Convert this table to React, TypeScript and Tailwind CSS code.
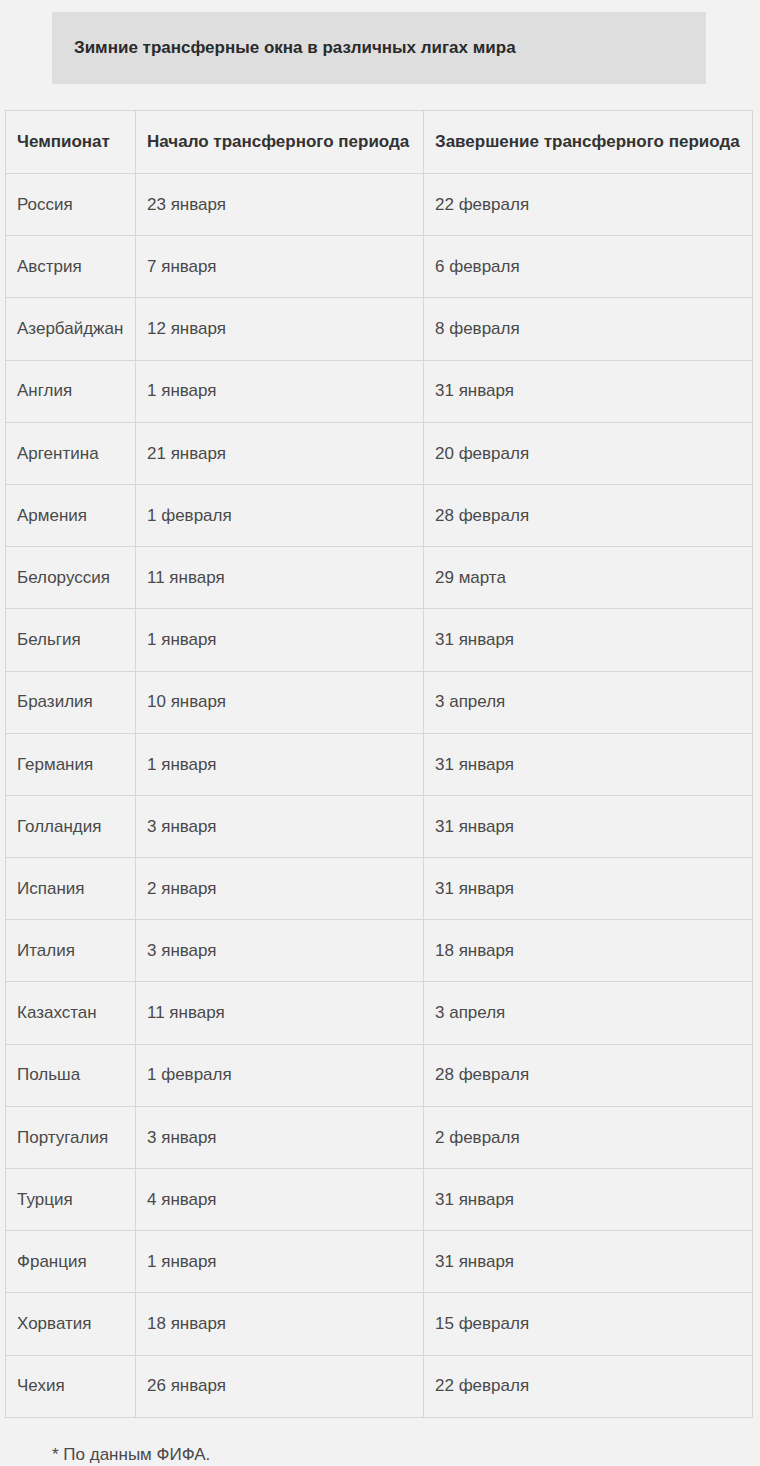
const rows: [string, string, string][] = [
  ['Россия', '23 января', '22 февраля'],
  ['Австрия', '7 января', '6 февраля'],
  ['Азербайджан', '12 января', '8 февраля'],
  ['Англия', '1 января', '31 января'],
  ['Аргентина', '21 января', '20 февраля'],
  ['Армения', '1 февраля', '28 февраля'],
  ['Белоруссия', '11 января', '29 марта'],
  ['Бельгия', '1 января', '31 января'],
  ['Бразилия', '10 января', '3 апреля'],
  ['Германия', '1 января', '31 января'],
  ['Голландия', '3 января', '31 января'],
  ['Испания', '2 января', '31 января'],
  ['Италия', '3 января', '18 января'],
  ['Казахстан', '11 января', '3 апреля'],
  ['Польша', '1 февраля', '28 февраля'],
  ['Португалия', '3 января', '2 февраля'],
  ['Турция', '4 января', '31 января'],
  ['Франция', '1 января', '31 января'],
  ['Хорватия', '18 января', '15 февраля'],
  ['Чехия', '26 января', '22 февраля'],
];

export default function App() {
  return (
    <div className="min-h-[1466px] bg-[#f2f2f2] text-[#4a4a4a] text-[17px] font-['Liberation_Sans',Arial,sans-serif] pt-3">
      <div className="mx-[52px] w-[654px] h-[72px] bg-[#dedede] flex items-center px-[22px] font-bold text-[#2b2b2b]">
        Зимние трансферные окна в различных лигах мира
      </div>
      <table className="mt-[26px] ml-[5px] w-[748px] border-collapse">
        <thead>
          <tr className="h-[63px] text-[#333]">
            <th className="w-[130px] border border-[#d6d6d6] px-[11px] text-left font-bold">Чемпионат</th>
            <th className="w-[288px] border border-[#d6d6d6] px-[11px] text-left font-bold">Начало трансферного периода</th>
            <th className="border border-[#d6d6d6] px-[11px] text-left font-bold">Завершение трансферного периода</th>
          </tr>
        </thead>
        <tbody>
          {rows.map(([country, start, end]) => (
            <tr key={country} className="h-[62.2px]">
              <td className="border border-[#d6d6d6] px-[11px]">{country}</td>
              <td className="border border-[#d6d6d6] px-[11px]">{start}</td>
              <td className="border border-[#d6d6d6] px-[11px]">{end}</td>
            </tr>
          ))}
        </tbody>
      </table>
      <p className="mt-[24px] ml-[52px]">* По данным ФИФА.</p>
    </div>
  );
}
